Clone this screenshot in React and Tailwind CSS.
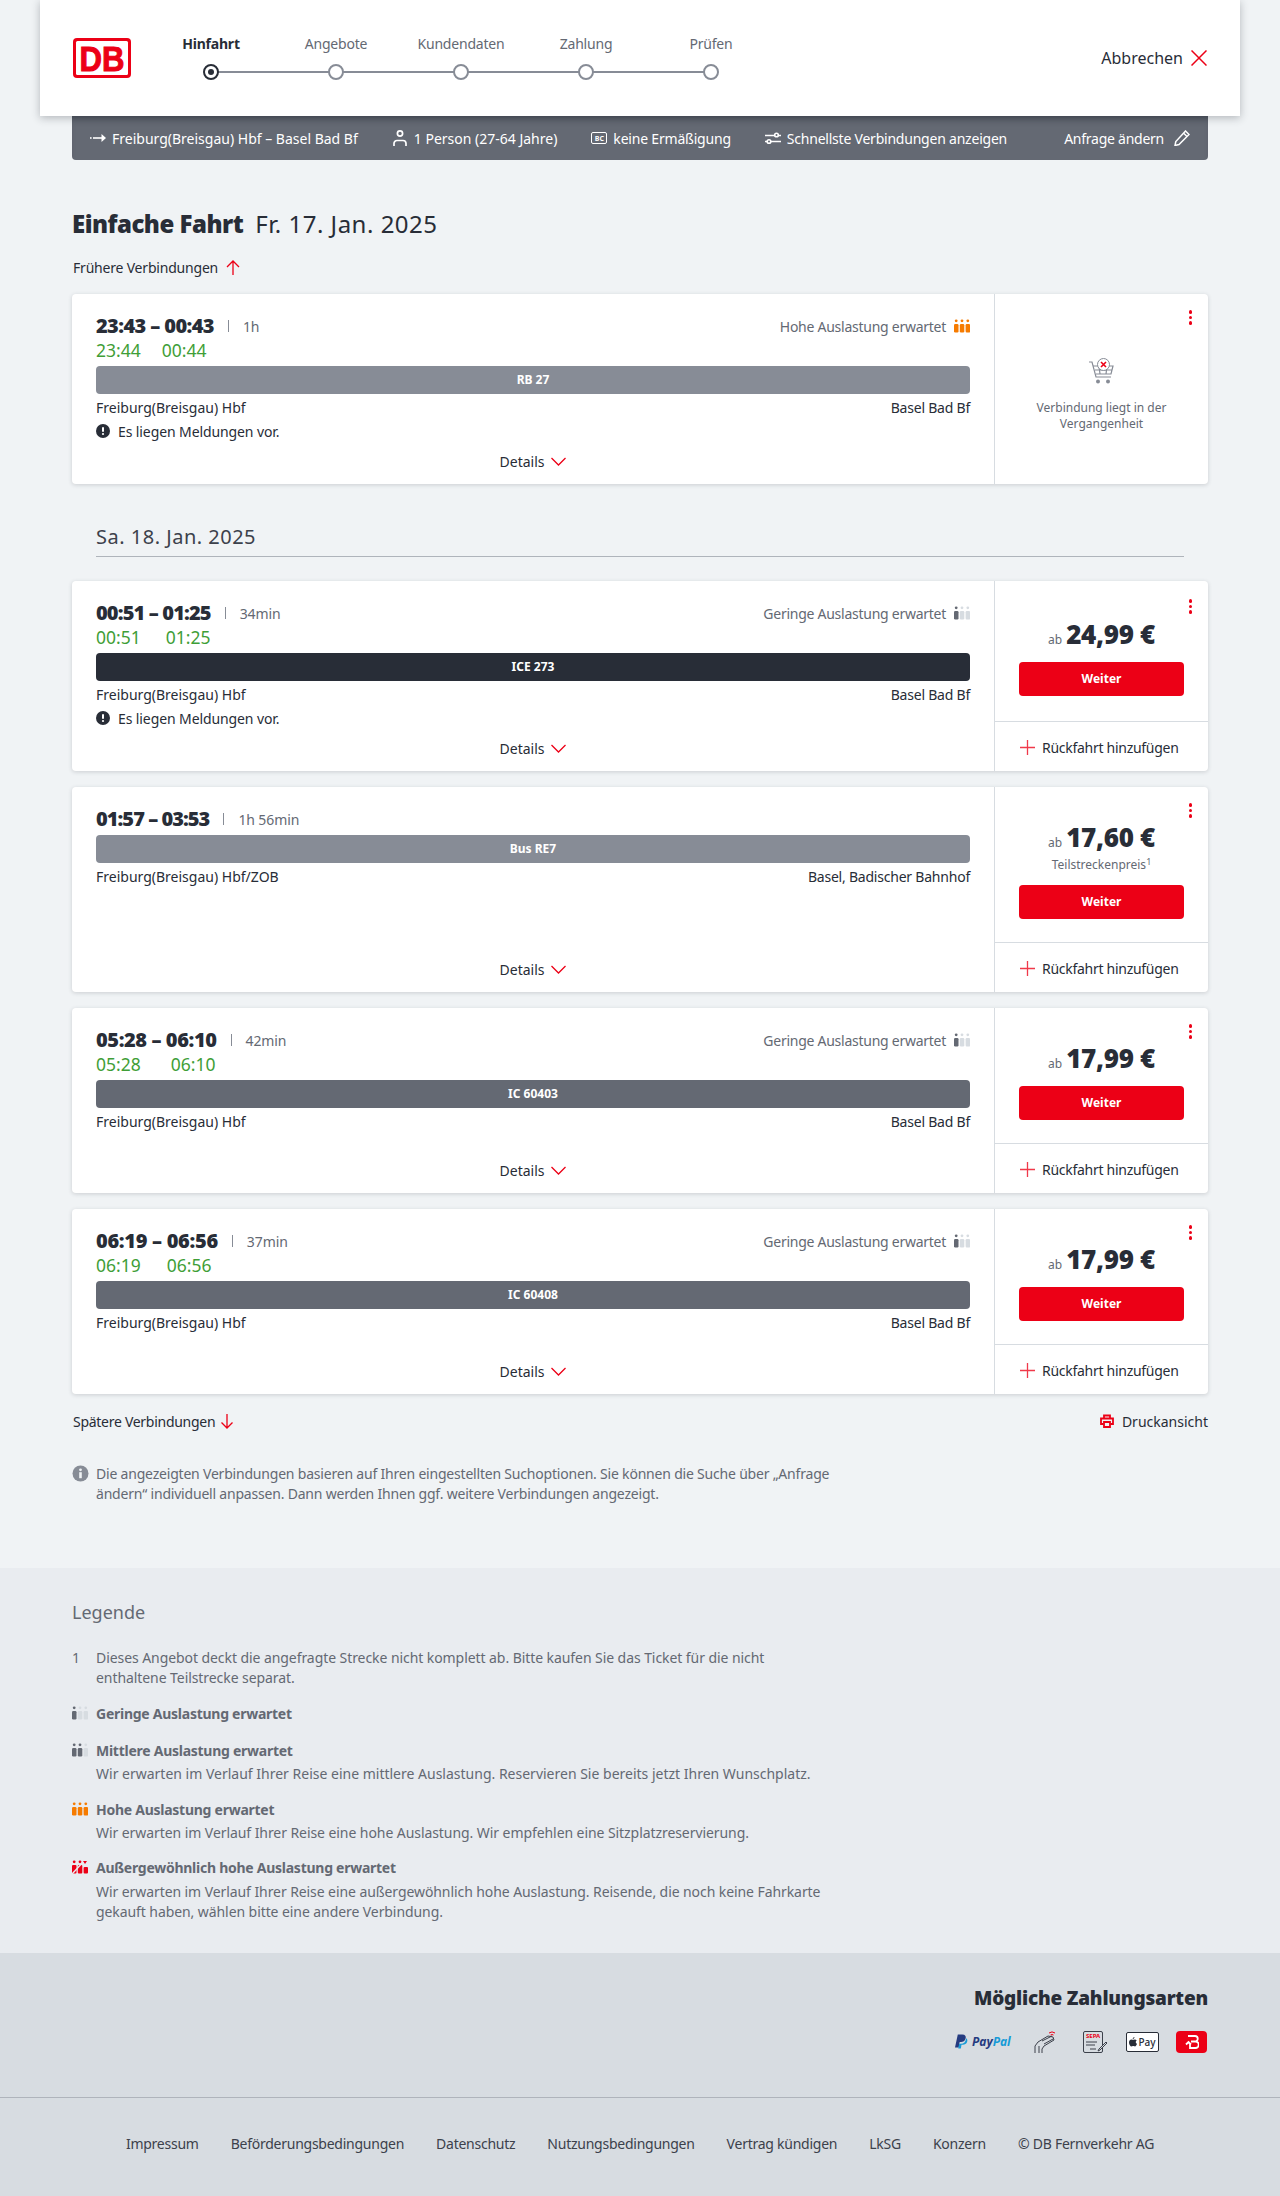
const font = { fontFamily: '"Noto Sans", Arial, sans-serif' }

const RED = '#ec0016'

function Occupancy({ level = 1, className = '' }) {
  const colors = {
    1: ['#646973', '#d7dce1', '#d7dce1'],
    2: ['#646973', '#646973', '#d7dce1'],
    3: ['#f67b00', '#f67b00', '#f67b00'],
  }[level]
  return (
    <svg width="16" height="14" viewBox="0 0 16 14" className={className}>
      {colors.map((c, i) => (
        <g key={i} fill={c}>
          <circle cx={2.2 + i * 5.8} cy="1.8" r="1.4" />
          <rect x={0 + i * 5.8} y="5" width="4.500" height="8.500" rx="1.200" />
        </g>
      ))}
    </svg>
  )
}

function Dots({ top }) {
  return (
    <div className={`absolute right-[16px] flex flex-col gap-[2px] ${top}`}>
      <span className="w-[3.5px] h-[3.5px] rounded-full bg-[#ec0016]" />
      <span className="w-[3.5px] h-[3.5px] rounded-full bg-[#ec0016]" />
      <span className="w-[3.5px] h-[3.5px] rounded-full bg-[#ec0016]" />
    </div>
  )
}

function Chevron() {
  return (
    <svg width="15" height="9" viewBox="0 0 15 9" fill="none" stroke={RED} strokeWidth="1.300" className="ml-[7px]">
      <path d="M.5 1l7 7 7-7" />
    </svg>
  )
}

function Connection({ c }) {
  return (
    <div className={`flex bg-white rounded-[4px] shadow-[0_1px_4px_rgba(40,45,55,0.18)] ${c.height}`}>
      <div className="flex-1 flex flex-col pl-[24px] pr-[24px] pt-[20px] border-r border-[#d7dce1]">
        <div className="flex items-center justify-between h-[24px]">
          <div className="flex items-center">
            <span className={`text-[20px] font-black text-[#282d37] ${c.timeTrack}`}>{c.time}</span>
            <span className="mx-[14px] w-px h-[12px] bg-[#878c96]" />
            <span className="text-[14px] tracking-[-0.1px] text-[#646973]">{c.duration}</span>
          </div>
          {c.load && (
            <div className="flex items-center text-[14px] tracking-[-0.26px] text-[#646973]">
              {c.load}
              <Occupancy level={c.level} className="ml-[8px]" />
            </div>
          )}
        </div>
        {c.real && (
          <div className="flex h-[24px] items-center text-[17.5px] text-[#3f9e37]">
            <span className={c.realGap}>{c.real[0]}</span>
            <span>{c.real[1]}</span>
          </div>
        )}
        <div className={`mt-[4px] h-[28px] rounded-[4px] flex items-center justify-center text-[12px] font-bold text-white ${c.barColor}`}>
          {c.train}
        </div>
        <div className="flex justify-between items-center h-[28px] pb-[2px] text-[14px] text-[#282d37]">
          <span>{c.from}</span>
          <span className="tracking-[-0.22px]">{c.to}</span>
        </div>
        {c.notice && (
          <div className="flex items-center h-[20px] pb-[2px] text-[14px] tracking-[-0.1px] text-[#282d37]">
            <svg width="14" height="14" viewBox="0 0 14 14" className="mr-[8px]">
              <circle cx="7" cy="7" r="7" fill="#282d37" />
              <rect x="6" y="3" width="2" height="5" rx="1" fill="#fff" />
              <circle cx="7" cy="10" r="1.100" fill="#fff" />
            </svg>
            Es liegen Meldungen vor.
          </div>
        )}
        <div className="mt-auto mb-[4px] h-[38px] flex items-center justify-center text-[14px] text-[#282d37]">
          Details
          <Chevron />
        </div>
      </div>
      <div className="relative w-[213px] flex flex-col">
        <Dots top={c.dotsTop} />
        {c.past ? (
          <div className="flex-1 flex flex-col items-center pt-[64px] text-center text-[12px] leading-[16px] text-[#646973]">
            <svg width="27" height="27" viewBox="0 0 27 27" fill="none" stroke="#878c96" strokeWidth="1.200">
              <path d="M1 4h3l4 15h15" />
              <path d="M5 8h20l-2 8H8M7 12h17M11 8l1 8M19 8l-1 8" />
              <circle cx="10" cy="23.500" r="2" fill="#878c96" stroke="none" />
              <circle cx="20" cy="23.500" r="2" fill="#878c96" stroke="none" />
              <circle cx="15.500" cy="6.500" r="6" fill="#fff" strokeWidth="1" />
              <path d="M13 4l5 5M18 4l-5 5" stroke={RED} strokeWidth="1.600" />
            </svg>
            <div className="mt-[15px]">Verbindung liegt in der<br />Vergangenheit</div>
          </div>
        ) : (
          <>
            <div className={`flex flex-col items-center border-b border-[#d7dce1] ${c.priceBox}`}>
              <div className="flex items-baseline h-[34px] text-[#282d37]">
                <span className="text-[12px] text-[#646973] mr-[4px]">ab</span>
                <span className="text-[26px] leading-[34px] font-black tracking-[-0.3px]">{c.price}</span>
              </div>
              {c.partial && (
                <div className="text-[12px] leading-[22px] text-[#646973]">
                  Teilstreckenpreis<sup className="text-[9px]">1</sup>
                </div>
              )}
              <button className={`${c.partial ? 'mt-[9px]' : 'mt-[11px]'} w-[165px] h-[34px] rounded-[4px] bg-[#ec0016] text-white text-[12px] font-bold`}>
                Weiter
              </button>
            </div>
            <div className="flex-1 flex items-center pl-[25px] pt-[2px] text-[14px] tracking-[-0.28px] text-[#282d37]">
              <svg width="15" height="15" viewBox="0 0 15 15" stroke="#f0394a" strokeWidth="1.300" className="mr-[7px]">
                <path d="M7.500 0v15M0 7.500h15" />
              </svg>
              Rückfahrt hinzufügen
            </div>
          </>
        )}
      </div>
    </div>
  )
}

const later = [
  {
    time: '00:51 – 01:25', timeTrack: 'tracking-[-0.85px]', duration: '34min', load: 'Geringe Auslastung erwartet', level: 1,
    real: ['00:51', '01:25'], realGap: 'mr-[25px]', train: 'ICE 273', barColor: 'bg-[#282d37]',
    from: 'Freiburg(Breisgau) Hbf', to: 'Basel Bad Bf', notice: true, price: '24,99 €',
    height: 'h-[190px]', dotsTop: 'top-[18px]', priceBox: 'h-[141px] pt-[36px]',
  },
  {
    time: '01:57 – 03:53', timeTrack: 'tracking-[-0.95px]', duration: '1h 56min', train: 'Bus RE7', barColor: 'bg-[#878c96]',
    from: 'Freiburg(Breisgau) Hbf/ZOB', to: 'Basel, Badischer Bahnhof', price: '17,60 €', partial: true,
    height: 'h-[205px]', dotsTop: 'top-[16px]', priceBox: 'h-[156px] pt-[33px]',
  },
  {
    time: '05:28 – 06:10', timeTrack: 'tracking-[-0.4px]', duration: '42min', load: 'Geringe Auslastung erwartet', level: 1,
    real: ['05:28', '06:10'], realGap: 'mr-[30px]', train: 'IC 60403', barColor: 'bg-[#646973]',
    from: 'Freiburg(Breisgau) Hbf', to: 'Basel Bad Bf', price: '17,99 €',
    height: 'h-[185px]', dotsTop: 'top-[16px]', priceBox: 'h-[136px] pt-[33px]',
  },
  {
    time: '06:19 – 06:56', timeTrack: 'tracking-[-0.3px]', duration: '37min', load: 'Geringe Auslastung erwartet', level: 1,
    real: ['06:19', '06:56'], realGap: 'mr-[26px]', train: 'IC 60408', barColor: 'bg-[#646973]',
    from: 'Freiburg(Breisgau) Hbf', to: 'Basel Bad Bf', price: '17,99 €',
    height: 'h-[185px]', dotsTop: 'top-[16px]', priceBox: 'h-[136px] pt-[33px]',
  },
]

const steps = ['Hinfahrt', 'Angebote', 'Kundendaten', 'Zahlung', 'Prüfen']

function Stepper() {
  return (
    <div className="flex ml-[17.5px] mt-[34px]">
      {steps.map((s, i) => (
        <div key={s} className="relative w-[125px] flex flex-col items-center">
          <span className={`text-[14px] leading-[20px] tracking-[-0.2px] ${i === 0 ? 'font-bold text-[#282d37]' : 'text-[#646973]'}`}>{s}</span>
          <span className={`relative z-10 mt-[10px] w-[16px] h-[16px] rounded-full bg-white border-2 ${i === 0 ? 'border-[#282d37]' : 'border-[#878c96]'} flex items-center justify-center`}>
            {i === 0 && <span className="w-[6px] h-[6px] rounded-full bg-[#282d37]" />}
          </span>
          {i < 4 && <span className="absolute left-[62px] top-[37px] w-[125px] h-[2px] bg-[#878c96]" />}
        </div>
      ))}
    </div>
  )
}

function LegendItem({ level, title, gap, track = '', descGap = 'mt-[4px]', children }) {
  return (
    <div className={gap}>
      <div className="flex items-center h-[20px]">
        <div className="w-[24px]">
          {level === 4 ? (
            <svg width="16" height="14" viewBox="0 0 16 14">
              <g fill={RED}>
                <circle cx="2.200" cy="1.800" r="1.400" /><circle cx="8" cy="1.800" r="1.400" />
                <rect x="0" y="5" width="4.500" height="8.500" rx="1" />
                <rect x="5.800" y="5" width="4.500" height="8.500" rx="1" />
                <rect x="11.600" y="7" width="4.400" height="6.500" rx="1" />
              </g>
              <path d="M0 14 13 0" stroke="#e9ecf0" strokeWidth="1.500" />
              <path d="M11 1l4 0-2 3Z" fill={RED} />
            </svg>
          ) : <Occupancy level={level} />}
        </div>
        <span className="text-[14px] font-bold tracking-[-0.26px] text-[#646973]">{title}</span>
      </div>
      {children && <p className={`ml-[24px] text-[14px] leading-[20px] text-[#646973] ${descGap} ${track}`}>{children}</p>}
    </div>
  )
}

export default function App() {
  return (
    <div style={font} className="bg-[#f0f3f5] w-[1280px]">
      <header className="relative z-10 mx-[40px] h-[116px] bg-white shadow-[0_2px_8px_rgba(40,45,55,0.3)] flex px-[33px]">
        <svg width="58" height="40" viewBox="0 0 58 40" className="mt-[38px]">
          <rect width="58" height="40" rx="4" fill={RED} />
          <rect x="3" y="3" width="52" height="34" rx="1.500" fill="#fff" />
          <text x="6.500" y="32.500" fontFamily="Liberation Sans" fontWeight="700" fontSize="35" fill={RED} stroke={RED} strokeWidth="1" textLength="45" lengthAdjust="spacingAndGlyphs">DB</text>
        </svg>
        <Stepper />
        <div className="ml-auto flex items-center text-[16px] text-[#282d37]">
          Abbrechen
          <svg width="16" height="16" viewBox="0 0 16 16" stroke={RED} strokeWidth="1.500" className="ml-[8px]">
            <path d="M.5.500l15 15M15.500.500l-15 15" />
          </svg>
        </div>
      </header>

      <div className="mx-[72px] h-[44px] bg-[#646973] rounded-b-[4px] flex items-center pl-[18px] pr-[18px] text-[14px] text-white shadow-[inset_0_6px_6px_-4px_rgba(40,45,55,0.5)]">
        <svg width="16" height="8" viewBox="0 0 16 8" className="mr-[6px]" fill="#fff">
          <rect x="0" y="3.200" width="1.600" height="1.600" />
          <rect x="3" y="3.200" width="10" height="1.600" />
          <path d="M11.500 0 16 4l-4.500 4Z" />
        </svg>
        <span>Freiburg(Breisgau) Hbf – Basel Bad Bf</span>
        <svg width="14" height="16" viewBox="0 0 14 16" fill="none" stroke="#fff" strokeWidth="1.700" className="ml-[35px] mr-[7px]">
          <circle cx="7" cy="3.500" r="2.600" />
          <path d="M1 16v-2.500a3 3 0 0 1 3-3h6a3 3 0 0 1 3 3V16" />
        </svg>
        <span>1 Person (27-64 Jahre)</span>
        <div className="ml-[34px] mr-[6px] w-[16px] h-[12px] rounded-[2px] border-[1.5px] border-white flex items-center justify-center text-[7px] leading-none font-bold">BC</div>
        <span className="tracking-[-0.2px]">keine Ermäßigung</span>
        <svg width="16" height="13" viewBox="0 0 16 13" fill="none" stroke="#fff" strokeWidth="1.600" className="ml-[34px] mr-[6px]">
          <path d="M0 3.500h10M13 3.500h3M0 9.500h2M6 9.500h10" />
          <circle cx="11.500" cy="3" r="1.800" />
          <circle cx="4" cy="9.500" r="1.800" />
        </svg>
        <span className="tracking-[-0.22px]">Schnellste Verbindungen anzeigen</span>
        <div className="ml-auto flex items-center tracking-[-0.25px]">
          Anfrage ändern
          <svg width="16" height="16" viewBox="0 0 16 16" fill="none" stroke="#fff" strokeWidth="1.500" className="ml-[10px]">
            <path d="M11.500 1 15 4.500 5 14.500l-4 1 .8-4ZM9.500 3 13 6.500" />
          </svg>
        </div>
      </div>

      <main className="mx-[72px]">
        <h1 className="mt-[48px] flex items-baseline text-[24px] leading-[32px] text-[#282d37]">
          <span className="font-black tracking-[-0.5px]">Einfache Fahrt</span>
          <span className="ml-[12px] tracking-[0.5px]">Fr. 17. Jan. 2025</span>
        </h1>
        <div className="mt-[15px] flex items-center h-[24px] text-[14px] tracking-[-0.2px] text-[#282d37] pl-px">
          Frühere Verbindungen
          <svg width="14" height="15" viewBox="0 0 14 15" fill="none" stroke={RED} strokeWidth="1.300" className="ml-[8px]">
            <path d="M7 15V1M1 7l6-6 6 6" />
          </svg>
        </div>
        <div className="mt-[15px]">
          <Connection c={{
            time: '23:43 – 00:43', timeTrack: 'tracking-[-0.6px]', duration: '1h', load: 'Hohe Auslastung erwartet', level: 3,
            real: ['23:44', '00:44'], realGap: 'mr-[21px]', train: 'RB 27', barColor: 'bg-[#878c96]',
            from: 'Freiburg(Breisgau) Hbf', to: 'Basel Bad Bf', notice: true, past: true,
            height: 'h-[190px]', dotsTop: 'top-[16px]',
          }} />
        </div>
        <div className="mx-[24px] mt-[37px] h-[36px] border-b border-[#afb4bb] text-[20px] leading-[32px] tracking-[0.5px] text-[#3c414b]">
          Sa. 18. Jan. 2025
        </div>
        <div className="mt-[24px] flex flex-col gap-[16px]">
          {later.map(c => <Connection key={c.time} c={c} />)}
        </div>
        <div className="mt-[15px] flex justify-between items-center h-[24px] text-[14px] text-[#282d37]">
          <div className="flex items-center pl-px tracking-[-0.28px]">
            Spätere Verbindungen
            <svg width="12" height="15" viewBox="0 0 12 15" fill="none" stroke={RED} strokeWidth="1.300" className="ml-[6px]">
              <path d="M6 0v14M.5 8.500 6 14l5.500-5.500" />
            </svg>
          </div>
          <div className="flex items-center">
            <svg width="14" height="14" viewBox="0 0 14 14" fill="none" stroke={RED} strokeWidth="1.800" className="mr-[8px]">
              <path d="M4 4V1.500h6V4M3.500 10H1V4.500h12V10h-2.500" />
              <path d="M4 8h6v5H4Z" />
            </svg>
            Druckansicht
          </div>
        </div>
        <div className="mt-[31px] flex w-[780px] text-[14px] leading-[20px] tracking-[-0.2px] text-[#646973]">
          <svg width="18" height="18" viewBox="0 0 18 18" className="shrink-0 mr-[6px] mt-[1px]">
            <circle cx="8.500" cy="8.500" r="8" fill="#878c96" />
            <circle cx="8.500" cy="4.800" r="1.400" fill="#f0f3f5" />
            <rect x="7.200" y="7.200" width="2.600" height="6" fill="#f0f3f5" />
          </svg>
          <p className="w-[740px]">Die angezeigten Verbindungen basieren auf Ihren eingestellten Suchoptionen. Sie können die Suche über „Anfrage ändern“ individuell anpassen. Dann werden Ihnen ggf. weitere Verbindungen angezeigt.</p>
        </div>
      </main>

      <section className="mt-[64px] h-[385px] bg-[#e9ecf0] px-[72px] pt-[31px]">
        <h2 className="text-[18px] leading-[26px] text-[#646973]">Legende</h2>
        <div className="mt-[23px] w-[760px]">
          <div className="flex text-[14px] leading-[20px] tracking-[-0.07px] text-[#646973] mb-[15px]">
            <span className="w-[24px] shrink-0">1</span>
            <p>Dieses Angebot deckt die angefragte Strecke nicht komplett ab. Bitte kaufen Sie das Ticket für die nicht enthaltene Teilstrecke separat.</p>
          </div>
          <LegendItem level={1} gap="mb-[17px]" title="Geringe Auslastung erwartet" />
          <LegendItem level={2} gap="mb-[15px]" title="Mittlere Auslastung erwartet">Wir erwarten im Verlauf Ihrer Reise eine mittlere Auslastung. Reservieren Sie bereits jetzt Ihren Wunschplatz.</LegendItem>
          <LegendItem level={3} gap="mb-[14px]" track="tracking-[-0.07px]" title="Hohe Auslastung erwartet">Wir erwarten im Verlauf Ihrer Reise eine hohe Auslastung. Wir empfehlen eine Sitzplatzreservierung.</LegendItem>
          <LegendItem level={4} descGap="mt-[5px]" track="tracking-[-0.08px]" title="Außergewöhnlich hohe Auslastung erwartet">Wir erwarten im Verlauf Ihrer Reise eine außergewöhnlich hohe Auslastung. Reisende, die noch keine Fahrkarte gekauft haben, wählen bitte eine andere Verbindung.</LegendItem>
        </div>
      </section>

      <section className="h-[145px] bg-[#d7dce1] border-b border-[#afb4bb] px-[72px] pt-[30px] flex flex-col items-end">
        <h2 className="text-[19px] leading-[30px] font-black tracking-[-0.2px] text-[#282d37]">Mögliche Zahlungsarten</h2>
        <div className="mt-[17px] flex items-center h-[24px] mr-px">
          <div className="flex items-center mr-[23px]">
            <svg width="13" height="16" viewBox="0 0 14 16" className="mr-[4px]">
              <path d="M3 0h5c3 0 4 2 3.500 4-.6 3-3 4-5 4H5l-1 6H0Z" fill="#253b80" />
              <path d="M12 4c1.500 1 1.500 2.500 1 4-.7 2-2.500 3-4.500 3H7l-.7 4H3.500l1-5h2c3 0 5-2 5.500-6Z" fill="#179bd7" />
            </svg>
            <span className="w-[39px] text-[12px] leading-none font-bold italic text-[#253b80]">Pay<span className="text-[#179bd7]">Pal</span></span>
          </div>
          <svg width="22" height="23" viewBox="0 0 22 23" fill="none" stroke="#3c414b" strokeWidth="1" className="mr-[27px]">
            <path d="M1 22v-7l3-4 10-6 5 1 1 3-10 6-2 3v4M5 22v-7" />
            <path d="M8 10l10-5M10 13l9-5" />
            <path d="M15 2a5 5 0 0 1 6 0M16.500 4a3 3 0 0 1 3 0" stroke={RED} />
          </svg>
          <div className="relative w-[25px] h-[22px] mr-[18px]">
            <div className="w-[20px] h-[22px] rounded-[2px] border border-[#3c414b] pl-[2px] text-[6px] leading-[9px] font-bold text-[#ec0016]">SEPA</div>
            <svg width="25" height="22" viewBox="0 0 25 22" fill="none" stroke="#3c414b" strokeWidth="1" className="absolute left-0 top-0">
              <path d="M3 11h11M3 14h9M7 18h6" />
              <path d="M16 18l-1 2 2-1 7-7-1-1Z" fill="#d7dce1" />
            </svg>
          </div>
          <div className="w-[33px] h-[20px] mr-[17px] rounded-[2px] bg-white border border-[#282d37] flex items-center justify-center text-[10px] leading-none font-medium text-[#282d37]">
            <svg width="8" height="10" viewBox="0 0 8 10" fill="#282d37" className="mr-[1px]">
              <path d="M5.500 0c0 1.200-.8 2-1.800 2C3.700 1 4.500.2 5.500 0ZM4 2.800c.5 0 1-.4 1.800-.4.8 0 1.500.4 1.900 1-1.400.9-1.200 2.800.3 3.400-.4 1.200-1.200 2.700-2.100 2.700-.7 0-.9-.4-1.700-.4s-1.100.4-1.700.4C1.400 9.500 0 7.500 0 5.500c0-1.900 1.200-3 2.400-3 .7 0 1.200.3 1.600.3Z" />
            </svg>
            Pay
          </div>
          <div className="w-[31px] h-[22px] rounded-[4px] bg-[#ec0016] flex items-center justify-center">
            <svg width="14" height="14" viewBox="0 0 14 14" fill="none" stroke="#fff" strokeWidth="1.800">
              <path d="M3 1h7a2.500 2.500 0 0 1 0 5.500H6M6 6.500h4.500a3 3 0 0 1 0 6.500H5V9M1 9.500 3.500 7 6 9.500" />
            </svg>
          </div>
        </div>
      </section>

      <footer className="h-[98px] bg-[#d7dce1] flex items-center justify-center gap-[32px] text-[14px] tracking-[-0.25px] text-[#3c414b] pb-[7px]">
        <span>Impressum</span>
        <span>Beförderungsbedingungen</span>
        <span>Datenschutz</span>
        <span>Nutzungsbedingungen</span>
        <span>Vertrag kündigen</span>
        <span>LkSG</span>
        <span>Konzern</span>
        <span>© DB Fernverkehr AG</span>
      </footer>
    </div>
  )
}
